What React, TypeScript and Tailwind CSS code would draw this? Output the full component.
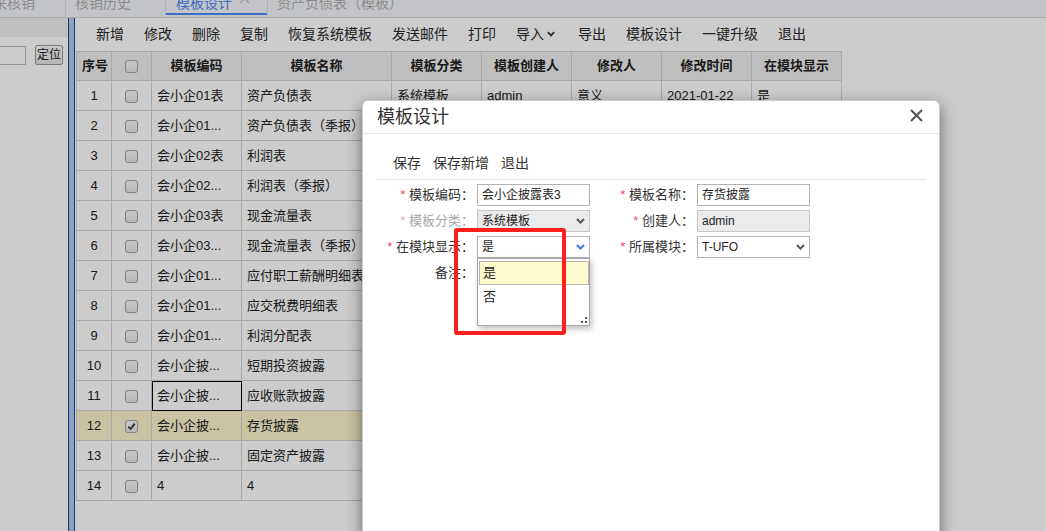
import React from "react";

const FONT = "font-['Liberation_Sans','Noto_Sans_CJK_SC',sans-serif]";

type Row = { no: number; code: string; name: string; checked?: boolean; focus?: boolean };

const rows: Row[] = [
  { no: 1, code: "会小企01表", name: "资产负债表" },
  { no: 2, code: "会小企01...", name: "资产负债表（季报）" },
  { no: 3, code: "会小企02表", name: "利润表" },
  { no: 4, code: "会小企02...", name: "利润表（季报）" },
  { no: 5, code: "会小企03表", name: "现金流量表" },
  { no: 6, code: "会小企03...", name: "现金流量表（季报）" },
  { no: 7, code: "会小企01...", name: "应付职工薪酬明细表" },
  { no: 8, code: "会小企01...", name: "应交税费明细表" },
  { no: 9, code: "会小企01...", name: "利润分配表" },
  { no: 10, code: "会小企披...", name: "短期投资披露" },
  { no: 11, code: "会小企披...", name: "应收账款披露", focus: true },
  { no: 12, code: "会小企披...", name: "存货披露", checked: true },
  { no: 13, code: "会小企披...", name: "固定资产披露" },
  { no: 14, code: "4", name: "4" },
];

function Checkbox({ checked }: { checked?: boolean }) {
  return (
    <span className="inline-flex w-[13px] h-[13px] rounded-[3px] border border-[#a2a2a2] bg-linear-to-b from-[#fafafa] to-[#e6e6e6] items-center justify-center align-middle">
      {checked && (
        <svg viewBox="0 0 10 10" className="w-[9px] h-[9px]">
          <path d="M1.5 5.2 L4 7.8 L8.6 1.8" fill="none" stroke="#333" strokeWidth="1.9" />
        </svg>
      )}
    </span>
  );
}

function Chevron({ color, w = 9 }: { color: string; w?: number }) {
  return (
    <svg width={w} height="6" viewBox="0 0 9 6" className="shrink-0">
      <path d="M1 1 L4.5 4.6 L8 1" fill="none" stroke={color} strokeWidth="2" />
    </svg>
  );
}

function TabBar() {
  return (
    <div className="h-[18px] overflow-hidden bg-[#f3f5f9] border-b border-[#d3d5db] text-[14px]">
      <div className="flex -mt-[6px] h-[21px] whitespace-nowrap">
        <div className="w-[66px] border-r border-[#dcdee4] leading-[19px] text-[#b0b0b0]">
          <span className="inline-block -ml-[21px]">往来核销</span>
        </div>
        <div className="w-[100px] pl-[9px] border-r border-[#dcdee4] leading-[19px] text-[#b0b0b0]">核销历史</div>
        <div className="w-[101px] pl-[10px] border-b-2 border-[#4a8cf7] flex items-start">
          <span className="leading-[19px] text-[#4a8cf7]">模板设计</span>
          <svg width="11" height="11" viewBox="0 0 11 11" className="ml-[7px] mt-[-1px]">
            <path d="M1 1L10 10M10 1L1 10" stroke="#c9c9c9" strokeWidth="1.6" />
          </svg>
        </div>
        <div className="pl-[9px] border-l border-[#dcdee4] leading-[19px] text-[#b0b0b0]">资产负债表（模板）</div>
      </div>
    </div>
  );
}

function LeftPanel() {
  return (
    <div className="w-[68px] shrink-0 overflow-hidden">
      <div className="h-[19px] bg-[#f0f0f0]" />
      <div className="mt-[8px] flex items-center">
        <div className="-ml-[2px] w-[28px] h-[19px] border border-[#b8b8b8] bg-white" />
        <div className="ml-[9px] w-[28px] h-[20px] border border-[#9a9a9a] rounded-[2px] bg-linear-to-b from-[#fbfbfb] to-[#e4e4e4] text-[12px] text-[#222] flex items-center justify-center leading-none">
          定位
        </div>
      </div>
    </div>
  );
}

function MainPanel() {
  const before = ["新增", "修改", "删除", "复制", "恢复系统模板", "发送邮件", "打印"];
  const after = ["导出", "模板设计", "一键升级", "退出"];
  const cell = "border border-[#d2d2d2] px-[5px] whitespace-nowrap overflow-hidden";
  return (
    <div className="flex-1 min-w-0">
      <div className="h-[32px] flex items-center pl-[21px] gap-[20px] text-[14px] text-[#2a2a2a] whitespace-nowrap">
        {before.map((t) => (
          <span key={t}>{t}</span>
        ))}
        <span className="flex items-center">
          导入
          <span className="ml-[3px] mr-[3px]">
            <Chevron color="#333" w={8} />
          </span>
        </span>
        {after.map((t) => (
          <span key={t}>{t}</span>
        ))}
      </div>
      <table className="ml-[1px] mt-[1px] w-[765px] table-fixed border-collapse text-[13px] text-[#222]">
        <colgroup>
          <col className="w-[35px]" />
          <col className="w-[40px]" />
          <col className="w-[90px]" />
          <col className="w-[150px]" />
          <col className="w-[90px]" />
          <col className="w-[90px]" />
          <col className="w-[90px]" />
          <col className="w-[90px]" />
          <col className="w-[90px]" />
        </colgroup>
        <thead>
          <tr className="bg-[#efefef] font-bold">
            <th className={`${cell} h-[29px] text-center px-0`}>序号</th>
            <th className={`${cell} text-center`}>
              <Checkbox />
            </th>
            <th className={`${cell} text-center`}>模板编码</th>
            <th className={`${cell} text-center`}>模板名称</th>
            <th className={`${cell} text-center`}>模板分类</th>
            <th className={`${cell} text-center`}>模板创建人</th>
            <th className={`${cell} text-center`}>修改人</th>
            <th className={`${cell} text-center`}>修改时间</th>
            <th className={`${cell} text-center`}>在模块显示</th>
          </tr>
        </thead>
        <tbody>
          {rows.map((r) => (
            <tr key={r.no} className={r.checked ? "bg-[#fcf4cc]" : ""}>
              <td className={`${cell} h-[30px] text-center px-0`}>{r.no}</td>
              <td className={`${cell} text-center`}>
                <Checkbox checked={r.checked} />
              </td>
              <td className={`${cell} ${r.focus ? "outline outline-1 outline-black -outline-offset-1" : ""}`}>{r.code}</td>
              <td className={cell}>{r.name}</td>
              <td className={cell}>系统模板</td>
              <td className={cell}>admin</td>
              <td className={cell}>意义</td>
              <td className={cell}>2021-01-22</td>
              <td className={cell}>是</td>
            </tr>
          ))}
        </tbody>
      </table>
    </div>
  );
}

function Label({ text, w, required = true, disabled = false }: { text: string; w: string; required?: boolean; disabled?: boolean }) {
  return (
    <div className={`${w} shrink-0 text-right whitespace-nowrap ${disabled ? "text-[#a8a8a8]" : "text-[#333]"}`}>
      {required && <span className={disabled ? "text-[#f2a2b9]" : "text-[#ea4a74]"}>* </span>}
      {text}：
    </div>
  );
}

function Box({ value, disabled = false, chevron }: { value?: string; disabled?: boolean; chevron?: string }) {
  return (
    <div
      className={`ml-[3px] w-[113px] h-[22px] shrink-0 border flex items-center pl-[4px] pr-[4px] text-[12px] text-[#222] ${
        disabled ? "bg-[#ebebeb] border-[#c6c6c6]" : "bg-white border-[#b3b3b3]"
      }`}
    >
      <span className="flex-1 truncate">{value}</span>
      {chevron && <Chevron color={chevron} />}
    </div>
  );
}

function Dialog() {
  return (
    <div className="absolute left-[362px] top-[100px] w-[578px] h-[480px] bg-white rounded-[6px] border border-black/20 shadow-[0_5px_15px_rgba(0,0,0,0.5)]">
      <div className="h-[33px] border-b border-[#e5e5e5] flex items-center justify-between pl-[14px] pr-[16px]">
        <span className="text-[18px] text-[#333] leading-none">模板设计</span>
        <svg width="13" height="13" viewBox="0 0 13 13" className="-mt-[3px]">
          <path d="M1 1L12 12M12 1L1 12" stroke="#555" strokeWidth="2" />
        </svg>
      </div>
      <div className="mx-[13px] h-[46px] border-b border-[#e5e5e5] flex items-end pb-[8px] pl-[17px] gap-[12px] text-[14px] leading-[16px] text-[#333]">
        <span>保存</span>
        <span>保存新增</span>
        <span>退出</span>
      </div>
      <div className="ml-[13px] pt-[4px] flex flex-col gap-[4px] text-[13px]">
        <div className="flex items-center h-[22px]">
          <Label text="模板编码" w="w-[98px]" />
          <Box value="会小企披露表3" />
          <Label text="模板名称" w="w-[104px]" />
          <Box value="存货披露" />
        </div>
        <div className="flex items-center h-[22px]">
          <Label text="模板分类" w="w-[98px]" disabled />
          <Box value="系统模板" disabled chevron="#555" />
          <Label text="创建人" w="w-[104px]" />
          <Box value="admin" disabled />
        </div>
        <div className="flex items-center h-[22px]">
          <Label text="在模块显示" w="w-[98px]" />
          <Box value="是" chevron="#3b7ddd" />
          <Label text="所属模块" w="w-[104px]" />
          <Box value="T-UFO" chevron="#555" />
        </div>
        <div className="flex items-center h-[22px]">
          <Label text="备注" w="w-[98px]" required={false} />
        </div>
      </div>

      <div className="absolute left-[114px] top-[157px] w-[113px] h-[68px] bg-white border border-[#a6a6a6] shadow-[2px_3px_6px_rgba(0,0,0,0.25)] text-[13px] text-[#222]">
        <div className="mt-[2px] ml-[1px] mr-0 h-[24px] bg-[#fffacb] border border-[#b5b5b5] pl-[3px] flex items-center">是</div>
        <div className="h-[24px] pl-[5px] flex items-center">否</div>
        <svg width="6" height="6" viewBox="0 0 6 6" className="absolute right-[2px] bottom-[2px]">
          <rect x="4" y="0" width="2" height="2" fill="#555" />
          <rect x="0" y="4" width="2" height="2" fill="#555" />
          <rect x="4" y="4" width="2" height="2" fill="#555" />
        </svg>
      </div>

      <div className="absolute left-[91px] top-[127px] w-[112px] h-[107px] border-[4px] border-[#ff1f1f] rounded-[3px]" />
    </div>
  );
}

export default function App() {
  return (
    <div className={`relative w-[1046px] h-[531px] overflow-hidden bg-white text-[#222] ${FONT}`}>
      <TabBar />
      <div className="flex h-[513px]">
        <LeftPanel />
        <div className="w-[7px] shrink-0 border-x border-[#1d44a6] bg-[#b3c7ef]" />
        <MainPanel />
      </div>
      <div className="absolute inset-0 bg-black/20" />
      <Dialog />
    </div>
  );
}
